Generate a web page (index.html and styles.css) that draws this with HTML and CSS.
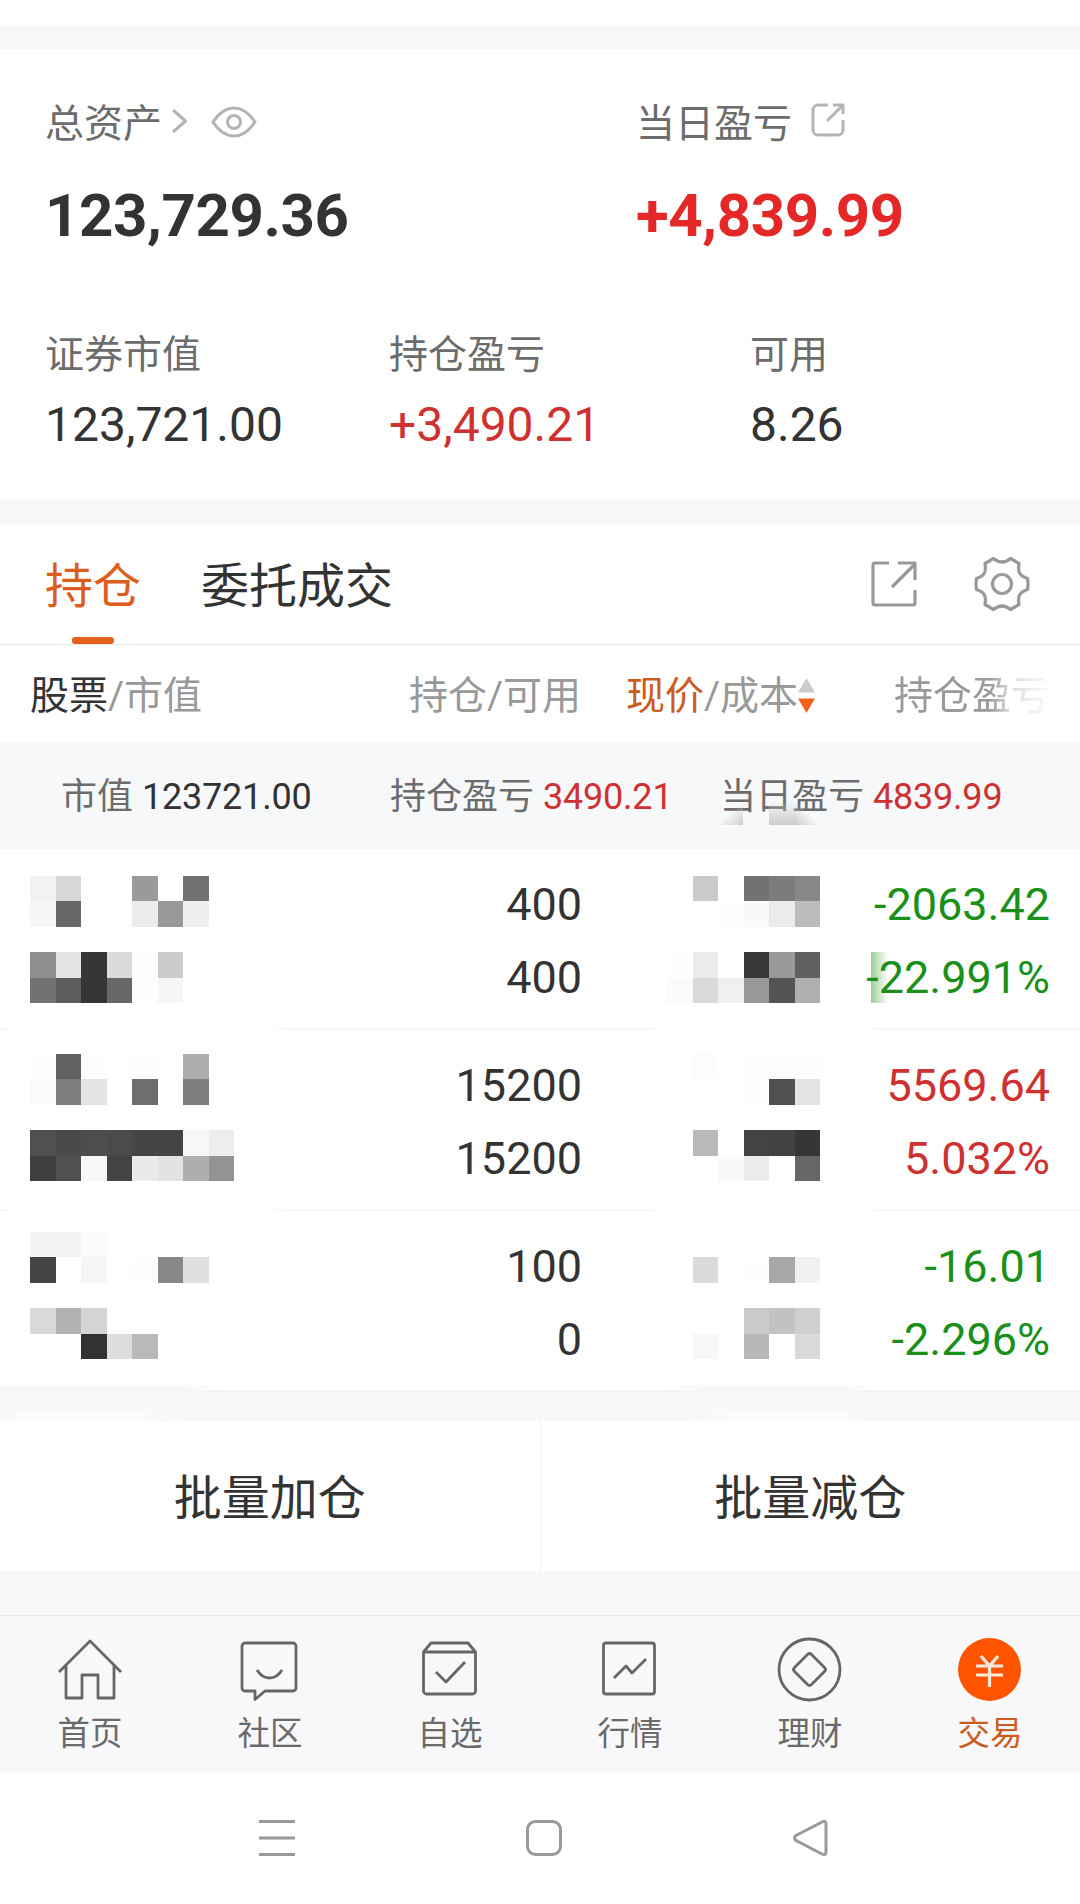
FILE: index.html
```
<!DOCTYPE html>
<html lang="zh-CN">
<head>
    <meta charset="UTF-8">
    <meta name="viewport" content="width=device-width, initial-scale=1.0">
    <title>持仓</title>
    <link rel="stylesheet" href="styles.css">
</head>
<body>
    <section class="assets">
        <div class="assets-main">
            <div>
                <div class="label">总资产
                    <svg class="icon-chevron" width="17" height="26" viewBox="0 0 17 26"><path d="M2 2l12.500 11L2 24"/></svg>
                    <svg class="icon-eye" width="46" height="32" viewBox="0 0 46 32"><path d="M2 16C8 7 15 2 23 2s15 5 21 14c-6 9-13 14-21 14S8 25 2 16z"/><circle cx="23" cy="16" r="6.500"/></svg>
                </div>
                <div class="total">123,729.36</div>
            </div>
            <div>
                <div class="label">当日盈亏
                    <svg class="icon-share" width="36" height="36" viewBox="0 0 36 36"><path d="M18 3H8a5 5 0 0 0-5 5v20a5 5 0 0 0 5 5h20a5 5 0 0 0 5-5V18M17 19L33 3M23 3h10v9"/></svg>
                </div>
                <div class="total up">+4,839.99</div>
            </div>
        </div>
        <div class="assets-sub">
            <div>
                <div class="label">证券市值</div>
                <div class="value">123,721.00</div>
            </div>
            <div>
                <div class="label">持仓盈亏</div>
                <div class="value red">+3,490.21</div>
            </div>
            <div>
                <div class="label">可用</div>
                <div class="value">8.26</div>
            </div>
        </div>
    </section>

    <nav class="tabs">
        <a class="tab active">持仓</a>
        <a class="tab">委托成交</a>
        <div class="tab-tools">
            <svg width="48" height="48" viewBox="0 0 48 48"><path d="M19 3H5a2 2 0 0 0-2 2v38a2 2 0 0 0 2 2h38a2 2 0 0 0 2-2V30M22 27L45 4M28 3h17v17"/></svg>
            <svg width="56" height="56" viewBox="0 0 56 56"><path d="M19.500 2.500Q28 9.500 36.500 2.500L45 7.500C43.500 16 45.500 20 53.500 22.500Q54.500 28 53.500 33.500C45.500 36 43.500 40 45 48.500L36.500 53.500Q28 46.500 19.500 53.500L11 48.500C12.500 40 10.500 36 2.500 33.500Q1.500 28 2.500 22.500C10.500 20 12.500 16 11 7.500z"/><circle cx="28" cy="28" r="9.500"/></svg>
        </div>
    </nav>

    <div class="table-head">
        <div class="col-name"><b>股票</b>/市值</div>
        <div class="col-qty">持仓/可用</div>
        <div class="col-price"><em>现价</em>/成本<svg width="17" height="36" viewBox="0 0 17 36"><path fill="#ccc" d="M8.500 0L17 14.500H0z"/><path fill="#f0611a" d="M0 20.500h17L8.500 35z"/></svg></div>
        <div class="col-profit fade">持仓盈亏</div>
    </div>

    <div class="summary">
        <div>市值 <span>123721.00</span></div>
        <div>持仓盈亏 <span class="red">3490.21</span></div>
        <div class="today">当日盈亏 <span class="red">4839.99</span><i class="smudge"></i></div>
    </div>

    <div class="stock">
        <div class="mosaic mosaic-name" data-cells="f2 d7 - - 9a - 70 -|f6 68 - - eb 98 ef -||8e e4 35 db fd cb - -|72 5c 35 68 fe f6 - -"></div>
        <div class="qty">400<br>400</div>
        <div class="mosaic mosaic-price" data-cells="- ca - 72 7c 88|- - fd f9 eb bc||fe eb - 38 98 60|fa d9 f0 98 54 af"></div>
        <div class="profit green">-2063.42<br>-22.991%<i class="smear"></i></div>
    </div>
    <div class="stock">
        <div class="mosaic mosaic-name" data-cells="fd 61 fd - fd - ad -|fb 7d e4 - 6e - 7d -||50 4a 4d 4b 45 44 f7 ed|3e 50 f8 44 ea e2 ae 93"></div>
        <div class="qty">15200<br>15200</div>
        <div class="mosaic mosaic-price" data-cells="- fc - fd fd fd|- - - fe 50 e3||- b9 - 43 42 36|- - f9 eb - 66"></div>
        <div class="profit red">5569.64<br>5.032%</div>
    </div>
    <div class="stock last">
        <div class="mosaic mosaic-name" data-cells="f4 f4 fb - - - - -|45 - f5 - fd 88 df -||d9 b2 d4 - - - - -|- - 32 dd b9 - - -"></div>
        <div class="qty">100<br>0</div>
        <div class="mosaic mosaic-price" data-cells="- - - - - -|- db - fe a8 f1||- - - ca c2 cf|- f7 - b8 - d9"></div>
        <div class="profit green">-16.01<br>-2.296%</div>
    </div>

    <div class="batch">
        <button>批量加仓</button>
        <button>批量减仓</button>
    </div>

    <footer class="tabbar">
        <a>
            <svg width="68" height="68" viewBox="0 0 68 68"><path d="M3 37L34 6l31 31M10 31v32h16V40h16v23h16V31"/></svg>
            首页
        </a>
        <a>
            <svg width="68" height="68" viewBox="0 0 68 68"><path d="M9 8h48a3 3 0 0 1 3 3v42a3 3 0 0 1-3 3H29l-10 8.500V56H9a3 3 0 0 1-3-3V11a3 3 0 0 1 3-3zM21 35q5 8 12.500 8T46 35"/></svg>
            社区
        </a>
        <a>
            <svg width="68" height="68" viewBox="0 0 68 68"><path d="M7.500 17v39a3 3 0 0 0 3 3h46a3 3 0 0 0 3-3V17L52 8H15zM7.500 17h52M20 37l10 10 19-20"/></svg>
            自选
        </a>
        <a>
            <svg width="68" height="68" viewBox="0 0 68 68"><rect x="7.500" y="8" width="51" height="51" rx="2.500"/><path d="M18 43l12-12 6 7 14-14"/></svg>
            行情
        </a>
        <a>
            <svg width="68" height="68" viewBox="0 0 68 68"><circle cx="33.500" cy="34.500" r="30.500"/><path d="M31.500 19.500q2-2 4 0l13 13q2 2 0 4l-13 13q-2 2-4 0l-13-13q-2-2 0-4z"/></svg>
            理财
        </a>
        <a class="active">
            <svg width="68" height="68" viewBox="0 0 68 68"><circle cx="33.500" cy="34.500" r="31.500"/><path d="M25 21l8.500 10L42 21M20 31h27M20 40h27M33.500 31v21"/></svg>
            交易
        </a>
    </footer>

    <div class="system-nav">
        <svg width="40" height="40" viewBox="0 0 40 40"><path d="M2 3.500h36M2 20h36M2 36.500h36"/></svg>
        <svg width="40" height="40" viewBox="0 0 40 40"><rect x="3.500" y="3.500" width="33" height="33" rx="8"/></svg>
        <svg width="40" height="40" viewBox="0 0 40 40"><path d="M5 17.500L31 4q4-2 4 2v28q0 4-4 2L5 22.500q-3-2.500 0-5z"/></svg>
    </div>

    <script src="script.js"></script>
</body>
</html>
```
FILE: styles.css
```
* {
    box-sizing: border-box;
}
body {
    margin: 0;
    width: 1080px;
    height: 1904px;
    overflow: hidden;
    background: #fff;
    color: #333;
    font-family: Roboto, "Noto Sans CJK SC", sans-serif;
    font-weight: 400;
}
svg {
    display: block;
    flex: none;
    fill: none;
    stroke-linejoin: round;
}
.red {
    color: #cf3030;
}
.green {
    color: #1a901a;
}

/* 资产 */
.assets {
    margin-top: 25px;
    height: 499px;
    padding: 50px 0 0 45px;
    border-top: 24px solid #f7f8fa;
    border-bottom: 24px solid #f7f8fa;
}
.assets-main {
    display: grid;
    grid-template-columns: 591px 1fr;
}
.assets-sub {
    display: grid;
    grid-template-columns: 344px 361px 1fr;
    margin-top: 79px;
}
.label {
    display: flex;
    align-items: center;
    height: 50px;
    font-size: 39px;
    line-height: 50px;
    color: #6c6c6c;
}
.label svg {
    stroke: #b4b4b4;
    stroke-width: 3;
}
.icon-chevron {
    margin: -6px 0 0 9px;
}
.icon-eye {
    margin: -5px 0 0 23px;
}
.icon-share {
    margin: -8px 0 0 18px;
}
.total {
    margin-top: 32px;
    font-size: 60px;
    font-weight: 700;
    letter-spacing: -0.4px;
    line-height: 70px;
}
.total.up {
    color: #e42727;
}
.value {
    margin-top: 20px;
    font-size: 48px;
    line-height: 50px;
}

/* 标签 */
.tabs {
    display: flex;
    align-items: center;
    height: 121px;
    padding: 0 50px 0 45px;
    border-bottom: 1px solid #e6e6e6;
}
.tab {
    position: relative;
    margin-right: 60px;
    padding-top: 5px;
    font-size: 48px;
    line-height: 60px;
}
.tab.active {
    color: #dd5d1c;
}
.tab.active::after {
    content: "";
    position: absolute;
    left: 27px;
    bottom: -27px;
    width: 42px;
    height: 7px;
    border-radius: 3px;
    background: #e5601c;
}
.tab-tools {
    display: flex;
    align-items: center;
    gap: 56px;
    margin-left: auto;
    stroke: #999;
    stroke-width: 3.200;
}

/* 表头 */
.table-head {
    display: flex;
    height: 96px;
    padding: 5px 30px 0;
    font-size: 39px;
    line-height: 92px;
    color: #999;
}
.table-head b {
    font-weight: 400;
    color: #333;
}
.table-head em {
    font-style: normal;
    color: #cc5c1c;
}
.col-name {
    width: 300px;
}
.col-qty {
    width: 251px;
    text-align: right;
}
.col-price {
    display: flex;
    align-items: center;
    width: 268px;
    padding-left: 45px;
}
.col-profit {
    width: 201px;
    padding-left: 45px;
    white-space: nowrap;
}
.fade {
    -webkit-mask-image: linear-gradient(90deg, #000 70%, rgba(0, 0, 0, 0.35) 80%, transparent 103%);
    mask-image: linear-gradient(90deg, #000 70%, rgba(0, 0, 0, 0.35) 80%, transparent 103%);
}

.summary {
    display: grid;
    grid-template-columns: 329px 330px 1fr;
    height: 108px;
    padding: 5px 0 0 61px;
    background: #f7f8fa;
    font-size: 36px;
    line-height: 103px;
    color: #6c6c6c;
    white-space: nowrap;
}
.summary span {
    color: #333;
    letter-spacing: -0.2px;
}
.summary .red {
    color: #cf3030;
}
.today {
    position: relative;
}
.smudge {
    position: absolute;
    left: -3px;
    top: 55px;
    width: 103px;
    height: 24px;
    background:
        linear-gradient(to bottom right, transparent 50%, #ccc) 0 0 / 26px 24px no-repeat,
        linear-gradient(to bottom, rgba(200, 200, 200, 0), #ccc) 52px 0 / 26px 24px no-repeat,
        linear-gradient(to bottom left, transparent 50%, #ccc) 78px 0 / 25px 24px no-repeat;
}

/* 持仓列表 */
.stock {
    display: grid;
    grid-template-columns: 204px 348px 85px 153px 1fr;
    height: 181px;
    padding: 0 30px;
    font-size: 45px;
    line-height: 72.600px;
    background: linear-gradient(90deg, #f4f4f4, transparent 14px, transparent 262px, #f4f4f4 300px, #f4f4f4 640px, transparent 664px, transparent 862px, #f4f4f4 890px) 0 100% / 100% 2px no-repeat;
}
.stock.last {
    background:
        linear-gradient(90deg, #f7f8fa 190px, transparent 225px, transparent 662px, #f7f8fa 700px, #f7f8fa 850px, transparent 874px) 0 100% / 100% 7px no-repeat,
        linear-gradient(#f3f3f3, #f3f3f3) 0 100% / 100% 2px no-repeat;
}
.mosaic {
    display: grid;
    grid-auto-rows: 25.450px;
    align-content: start;
    padding-top: 27px;
}
.stock:nth-of-type(4) .mosaic {
    padding-top: 24px;
}
.stock.last .mosaic {
    padding-top: 21px;
}
.mosaic-name {
    grid-template-columns: repeat(8, 25.500px);
}
.mosaic-price {
    grid-column: 4;
    grid-template-columns: repeat(6, 25.500px);
}
.qty,
.profit {
    padding-top: 20px;
    text-align: right;
}
.profit {
    position: relative;
}
.smear {
    position: absolute;
    left: 51px;
    top: 103px;
    width: 17px;
    height: 51px;
    background: linear-gradient(90deg, rgba(26, 144, 26, 0.45), transparent);
}

/* 批量操作 */
.batch {
    display: flex;
    height: 223px;
    padding: 29px 0 44px;
    background:
        linear-gradient(90deg, transparent, #fcfcfd 30px, #fcfcfd 100px, transparent 190px) 0 19px / 190px 10px no-repeat,
        linear-gradient(90deg, transparent, #fcfcfd 80px, #fcfcfd 140px, transparent 180px) 685px 19px / 180px 10px no-repeat,
        #f7f8fa;
}
.batch button {
    flex: 1;
    border: none;
    padding: 0 0 5px;
    background: #fff;
    color: #333;
    font: inherit;
    font-size: 48px;
}
.batch button + button {
    border-left: 1px solid #f0f0f2;
}

/* 底部导航 */
.tabbar {
    display: grid;
    grid-template-columns: repeat(6, 1fr);
    height: 157px;
    padding-top: 19px;
    border-top: 1px solid #e9eaec;
    background: #f8f8fa;
}
.tabbar a {
    display: flex;
    flex-direction: column;
    align-items: center;
    gap: 10px;
    font-size: 32.500px;
    line-height: 42px;
    color: #6a6a6a;
}
.tabbar svg {
    stroke: #666;
    stroke-width: 2.800;
}
.tabbar .active {
    color: #cc5c1c;
}
.tabbar .active circle {
    fill: #f50;
    stroke: none;
}
.tabbar .active svg {
    stroke: #ffe9dd;
    stroke-width: 3.200;
}
.system-nav {
    display: flex;
    justify-content: center;
    gap: 227px;
    padding: 46px 0 0 7px;
    stroke: #999;
    stroke-width: 3;
}
```
FILE: script.js
```
document.querySelectorAll('.mosaic').forEach(box => {
    const rows = box.dataset.cells.split('|');
    const cols = rows[0].split(' ').length;
    rows.forEach(row => {
        const cells = row ? row.split(' ') : Array(cols).fill('-');
        cells.forEach(c => {
            const cell = document.createElement('i');
            if (c !== '-') cell.style.background = `#${c}${c}${c}`;
            box.appendChild(cell);
        });
    });
});
```
